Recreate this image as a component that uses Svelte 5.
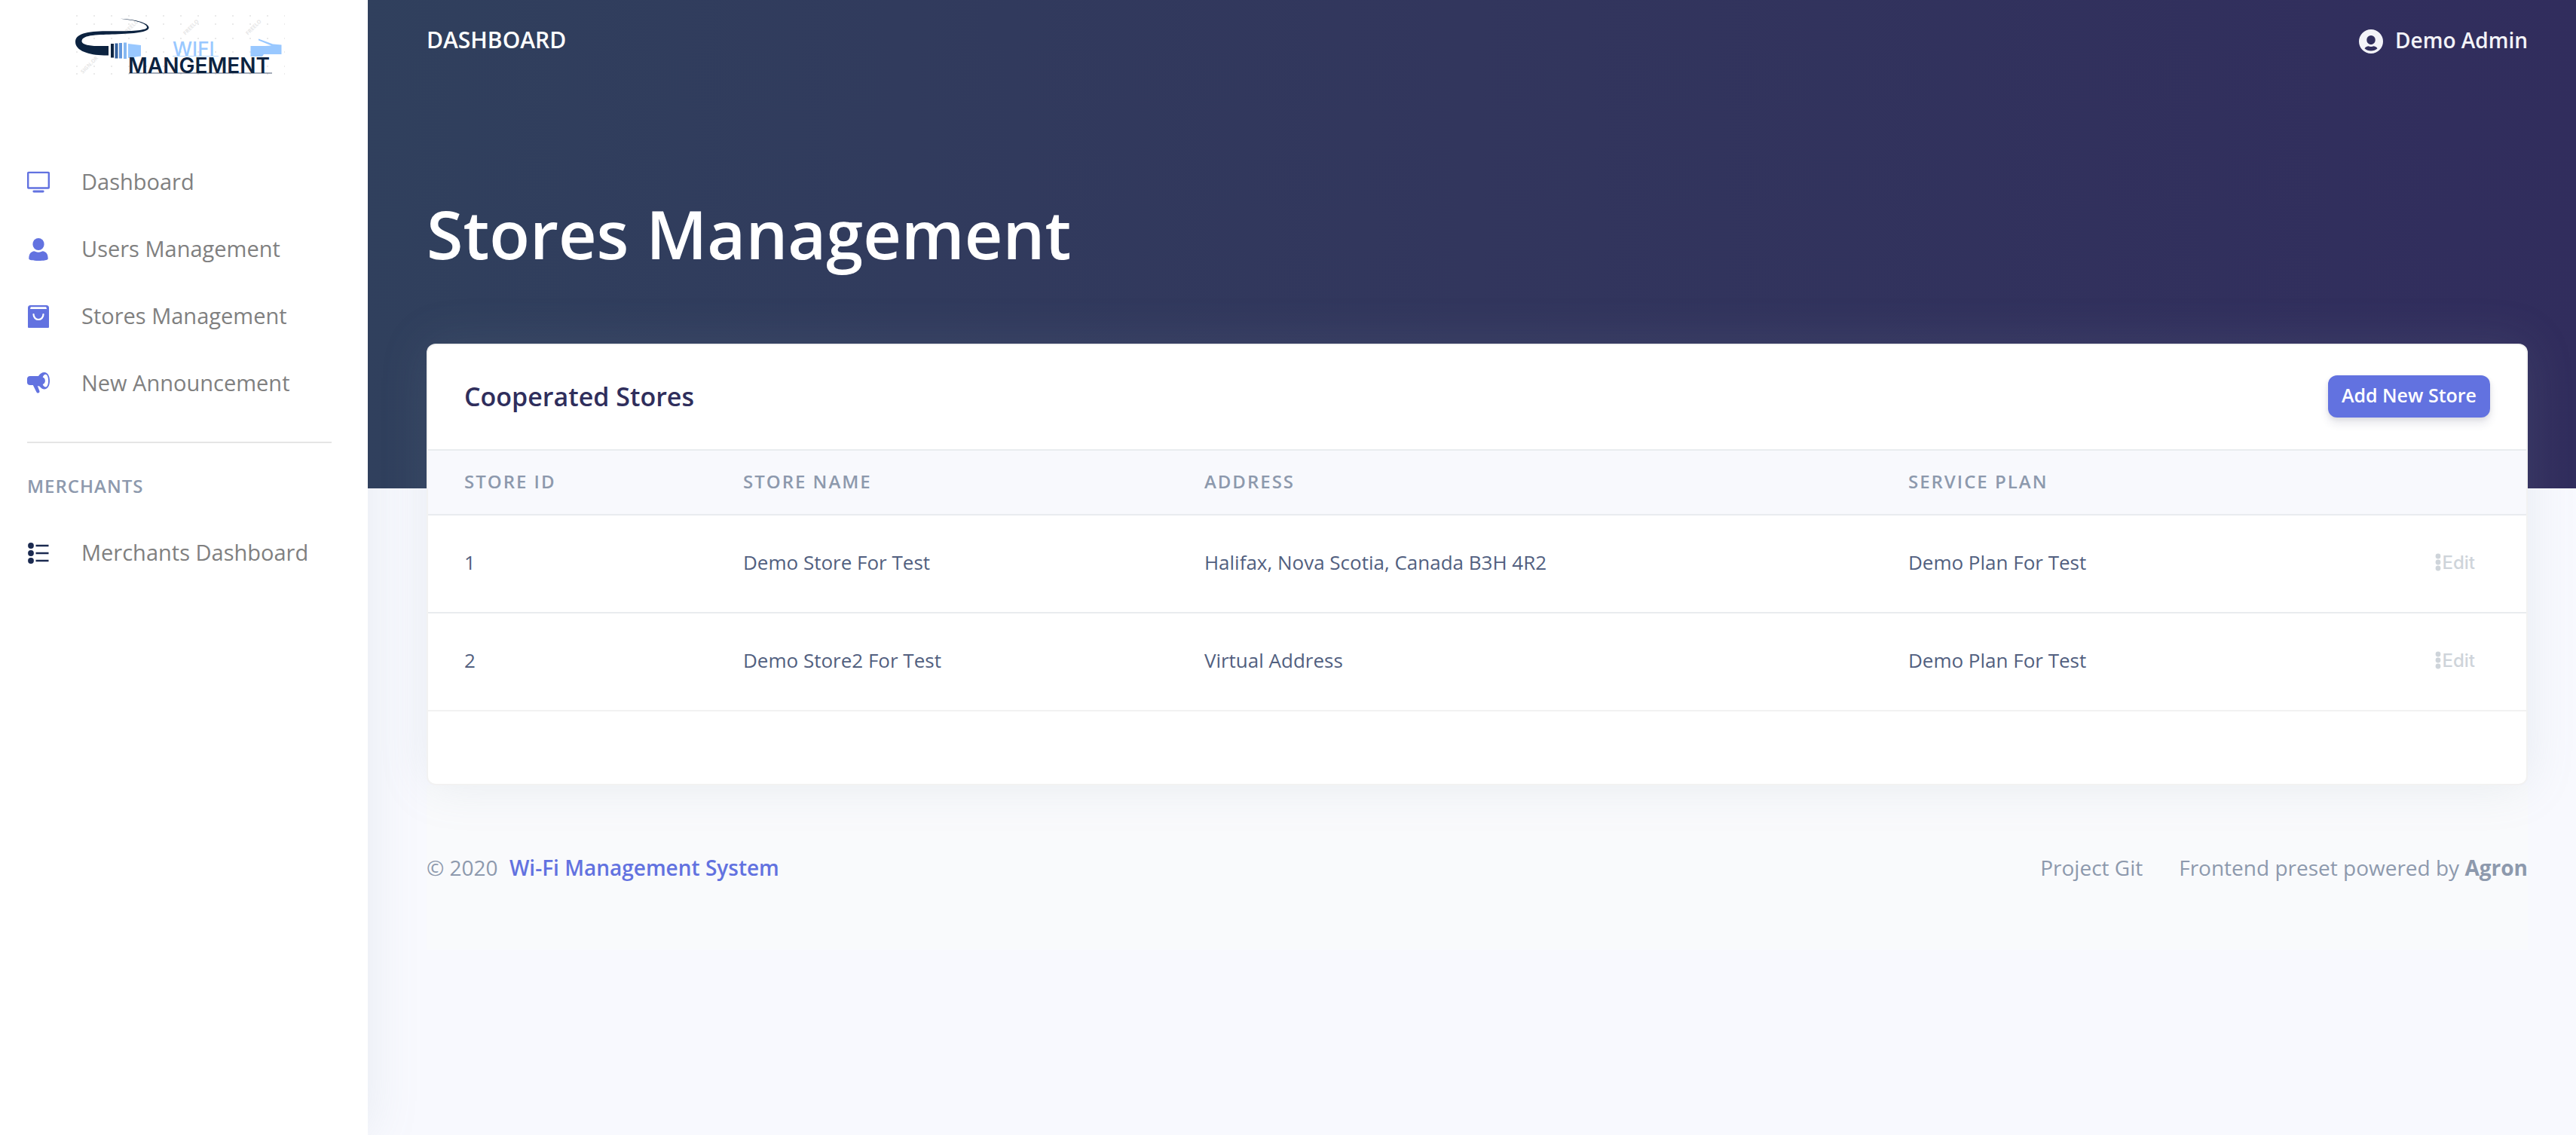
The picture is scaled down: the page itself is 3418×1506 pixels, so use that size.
<script>
  const stores = [
    { id: 1, name: 'Demo Store For Test', address: 'Halifax, Nova Scotia, Canada B3H 4R2', plan: 'Demo Plan For Test' },
    { id: 2, name: 'Demo Store2 For Test', address: 'Virtual Address', plan: 'Demo Plan For Test' }
  ];

  const links = [
    { icon: 'tv', label: 'Dashboard' },
    { icon: 'user', label: 'Users Management' },
    { icon: 'bag', label: 'Stores Management' },
    { icon: 'horn', label: 'New Announcement' }
  ];

  const dotColumns = Array.from({ length: 13 }, (_, i) => 2 + i * 23);
  const dotRows = [1, 12, 31, 49, 68, 78];
</script>

{#snippet icon(name)}
  <svg class="icon {name}" viewBox="0 0 30 30" aria-hidden="true">
    {#if name === 'tv'}
      <rect x="1.2" y="1.9" width="27.6" height="20.6" rx=".6" fill="none" stroke="currentColor" stroke-width="2.4" />
      <path d="M8.8 27h12.4" stroke="currentColor" stroke-width="2.8" stroke-linecap="round" />
    {:else if name === 'user'}
      <ellipse cx="15" cy="8" rx="7.6" ry="8" fill="currentColor" />
      <path d="M2.3 27.5c0-6 2-9.300 6.700-10.200 1.500 0 3 1.500 6 1.500s4.500-1.500 6-1.500c4.700.9 6.700 4.200 6.700 10.200 0 1.600-5.500 2.500-12.700 2.500S2.300 29.100 2.300 27.500z" fill="currentColor" />
    {:else if name === 'bag'}
      <path d="M4.500 0h21a3.500 3.500 0 0 1 3.500 3.500V29a1 1 0 0 1-1 1H2a1 1 0 0 1-1-1V3.500A3.500 3.500 0 0 1 4.500 0z" fill="currentColor" />
      <path d="M4.800 2.300h20.400l.8 2.700H4z" fill="#fff" />
      <path d="M8.500 12c0 4.300 3 7 6.500 7s6.500-2.700 6.500-7" fill="none" stroke="#fff" stroke-width="2.200" stroke-linecap="round" />
    {:else if name === 'horn'}
      <path d="M4 5h11c1.700-3 4.500-5 8-5 4.300 0 7 5 7 11.200S27.300 22.500 23 22.500c-2.500 0-4.700-1.400-6.300-3.700l-2.900-.8 2.500 6.500c.6 1.700-.3 3-1.800 3-1 0-1.700-.5-2.100-1.300L7.800 17H4c-2.500 0-4-1.600-4-3.600V8.600C0 6.600 1.500 5 4 5z" fill="currentColor" />
      <path d="M24.500 2.800c-1.700 0-3 1.500-3.800 3.600 2 .7 3.200 2.500 3.200 4.800s-1.200 4-3.200 4.800c.8 2.200 2.100 3.600 3.800 3.600 2.200 0 3.600-3.800 3.600-8.400s-1.400-8.400-3.600-8.400z" fill="#fff" />
    {:else if name === 'list'}
      <g fill="currentColor">
        <circle cx="5" cy="5" r="3.900" /><circle cx="5" cy="15" r="3.900" /><circle cx="5" cy="25" r="3.900" />
        <path d="M11.500 3.800h17v2.400h-17zM11.500 13.800h17v2.400h-17zM11.500 23.800h17v2.400h-17z" />
      </g>
    {/if}
  </svg>
{/snippet}

<div class="layout">
  <aside class="sidebar">
    <a class="brand" href="#home" aria-label="Wifi Mangement">
      <svg class="logo" viewBox="0 0 278 80" aria-hidden="true">
        <g fill="#e3e3e3">
          {#each dotRows as y}
            {#each dotColumns as x}
              <circle cx={x} cy={y} r="1" />
            {/each}
          {/each}
        </g>
        <g class="mark">
          <text transform="translate(66 27) rotate(-45)">FREELO</text>
          <text transform="translate(146 27) rotate(-45)">FREELO</text>
          <text transform="translate(229 27) rotate(-45)">FREELO</text>
          <text transform="translate(10 78) rotate(-45)">SIGN.OR</text>
        </g>
        <path d="M56 4.500C76 5 97.500 10 97.500 16.500c0 6.500-20 8-45 9C32 26.200 9 25.500 8.500 34.500c0 6 16 7 27.500 6.500h8v12.500H38C18 53 0 47.500 0 35.500 0 22 24 21 50 21.200c22 .3 45-.7 45-5C95 10.500 76 6 56 4.500z" fill="#0c2340" />
        <path d="M47 38h4v18.500h-4z" fill="#0c2340" />
        <path d="M52.500 37.500h4v20h-4z" fill="#35619d" />
        <path d="M58 37h4v20.500h-4z" fill="#6297dc" />
        <path d="M64 36.500h4V58h-4z" fill="#86b8f2" />
        <path d="M70 38l17 2v14.500l-17 2.500z" fill="#99c8ff" />
        <path d="M243 31.500l19 7 11.500 1V52H250l-2 3h-15.500V41H252l8-.5-17-7z" fill="#99c8ff" />
        <path d="M129 54.500h61" stroke="#b8d9ff" />
        <path d="M71 77h190" stroke="#4a5b74" />
        <text class="wifi" x="129" y="54">WIFI</text>
        <text class="name" x="70" y="77">MANGEMENT</text>
      </svg>
    </a>

    <nav>
      <ul>
        {#each links as link}
          <li><a class="nav-link" href="#{link.icon}">{@render icon(link.icon)}<span>{link.label}</span></a></li>
        {/each}
      </ul>
      <hr />
      <h6>MERCHANTS</h6>
      <ul>
        <li><a class="nav-link" href="#merchants">{@render icon('list')}<span>Merchants Dashboard</span></a></li>
      </ul>
    </nav>
  </aside>

  <div class="main">
    <header class="hero">
      <div class="topbar">
        <a class="crumb" href="#dashboard">DASHBOARD</a>
        <a class="account" href="#account">
          <svg class="avatar" viewBox="0 0 32 32" aria-hidden="true">
            <path fill-rule="evenodd" d="M16 0a16 16 0 1 0 0 32 16 16 0 0 0 0-32zm0 8a5.700 5.700 0 0 1 5.700 6c0 3.500-2.500 6-5.700 6s-5.700-2.500-5.700-6A5.700 5.700 0 0 1 16 8zM7.500 25.200c1.500-2 3.500-2.900 5-2.900 1.200.5 2.300.7 3.500.7s2.300-.2 3.500-.7c1.500 0 3.500.9 5 2.900a12.500 12.500 0 0 1-17 0z" />
          </svg>
          <span>Demo Admin</span>
        </a>
      </div>
      <h1>Stores Management</h1>
    </header>

    <main class="content">
      <section class="card">
        <div class="card-header">
          <h3>Cooperated Stores</h3>
          <button class="add" type="button">Add New Store</button>
        </div>
        <table>
          <colgroup>
            <col class="c-id" /><col class="c-name" /><col class="c-address" /><col /><col class="c-edit" />
          </colgroup>
          <thead>
            <tr>
              <th scope="col">STORE ID</th>
              <th scope="col">STORE NAME</th>
              <th scope="col">ADDRESS</th>
              <th scope="col">SERVICE PLAN</th>
              <th scope="col" aria-label="Actions"></th>
            </tr>
          </thead>
          <tbody>
            {#each stores as store}
              <tr>
                <td>{store.id}</td>
                <td>{store.name}</td>
                <td>{store.address}</td>
                <td>{store.plan}</td>
                <td class="actions">
                  <button class="edit" type="button">
                    <svg viewBox="0 0 8 24" aria-hidden="true">
                      <circle cx="4" cy="4" r="3.400" /><circle cx="4" cy="12" r="3.400" /><circle cx="4" cy="20" r="3.400" />
                    </svg>Edit</button>
                </td>
              </tr>
            {/each}
          </tbody>
        </table>
        <div class="card-footer"></div>
      </section>

      <footer>
        <div class="copyright">© 2020 <a href="#system">Wi-Fi Management System</a></div>
        <div class="credits">
          <a href="#git">Project Git</a>
          <span>Frontend preset powered by <b>Agron</b></span>
        </div>
      </footer>
    </main>
  </div>
</div>

<style>
  :global(body) {
    background: #f8f9fe;
  }

  .layout,
  .layout * {
    box-sizing: border-box;
  }

  .layout {
    display: grid;
    grid-template-columns: 488px minmax(0, 1fr);
    min-height: 100vh;
    font-family: 'Open Sans', sans-serif;
    font-size: 28px;
    line-height: 42px;
  }

  a {
    color: inherit;
    text-decoration: none;
  }

  h1,
  h3,
  h6,
  ul {
    margin: 0;
    padding: 0;
    list-style: none;
  }

  button {
    border: 0;
    cursor: pointer;
  }

  /* Sidebar */
  .sidebar {
    padding: 20px 36px;
    background: #fff;
    box-shadow: 0 0 64px rgba(136, 152, 170, 0.15);
  }

  .brand {
    display: block;
    margin: 0 64px 97px;
  }

  .logo {
    display: block;
    width: 278px;
    height: 80px;
  }

  .mark {
    fill: #e6e6e6;
    font: 700 7px 'Open Sans', sans-serif;
  }

  .wifi {
    fill: #99c8ff;
    font: 500 26px Inter, sans-serif;
  }

  .name {
    fill: #0c2340;
    font: 600 28px Inter, sans-serif;
  }

  .nav-link {
    display: flex;
    align-items: center;
    height: 89px;
    color: #808080;
    font-size: 29px;
  }

  .nav-link span {
    padding-bottom: 2px;
  }

  .icon {
    width: 30px;
    height: 30px;
    margin-right: 42px;
    color: #6272e0;
  }

  .icon.list {
    color: #1b2a50;
  }

  hr {
    height: 2px;
    margin: 33px 12px 33px 0;
    border: 0;
    background: #e5e5e5;
  }

  h6 {
    margin-bottom: 20px;
    color: #8d99ad;
    font-size: 24px;
    font-weight: 600;
    line-height: 48px;
    letter-spacing: 1px;
  }

  /* Header band */
  .hero {
    position: relative;
    padding: 0 64px 192px 78px;
    background: linear-gradient(87deg, #30405d 0%, #32365d 50%, #312d5d 100%);
    color: #fff;
  }

  .topbar {
    display: flex;
    align-items: center;
    justify-content: space-between;
    height: 106px;
  }

  .crumb,
  .account {
    font-weight: 600;
  }

  .crumb {
    font-size: 30px;
  }

  .account {
    display: flex;
    align-items: center;
    gap: 16px;
    color: #f3f3f8;
  }

  .avatar {
    width: 32px;
    height: 32px;
    margin-top: 4px;
    fill: currentColor;
  }

  h1 {
    padding: 144px 0 86px;
    font-size: 88px;
    font-weight: 600;
    line-height: 120px;
  }

  /* Card */
  .content {
    margin-top: -192px;
    padding: 0 64px 0 78px;
  }

  .card {
    position: relative;
    z-index: 1;
    border: 2px solid rgba(0, 0, 0, 0.05);
    border-radius: 12px;
    background: #fff;
    box-shadow: 0 0 64px rgba(136, 152, 170, 0.15);
  }

  .card-header {
    display: flex;
    align-items: center;
    justify-content: space-between;
    height: 140px;
    padding: 0 48px 2px;
    border-bottom: 2px solid #e9ecef;
  }

  h3 {
    color: #2f2e5c;
    font-size: 34px;
    font-weight: 600;
    line-height: 52px;
  }

  .add {
    height: 56px;
    padding: 0 18px 4px;
    border-radius: 12px;
    background: #6272e0;
    box-shadow: 0 8px 12px rgba(50, 50, 93, 0.11), 0 2px 6px rgba(0, 0, 0, 0.08);
    color: #fff;
    font: 600 25px 'Open Sans', sans-serif;
  }

  table {
    width: 100%;
    border-spacing: 0;
    table-layout: fixed;
    color: #525f7f;
    font-size: 26px;
  }

  .c-id {
    width: 13.29%;
  }

  .c-name {
    width: 21.98%;
  }

  .c-address {
    width: 33.55%;
  }

  .c-edit {
    width: 10%;
  }

  th,
  td {
    padding: 0 48px 4px;
    border-bottom: 2px solid #e9ecef;
    text-align: left;
  }

  th {
    height: 86px;
    padding-bottom: 2px;
    background: #f8f9fd;
    color: #8d99ad;
    font-size: 24px;
    font-weight: 600;
    letter-spacing: 2px;
  }

  td {
    height: 130px;
  }

  tbody tr:last-child td {
    border-color: #f2f2f2;
  }

  td.actions {
    padding-bottom: 0;
    text-align: right;
  }

  .edit {
    display: inline-flex;
    align-items: center;
    gap: 1px;
    padding: 0 20px;
    background: none;
    color: #ced4da;
    font: 500 24px Inter, sans-serif;
  }

  .edit svg {
    width: 8px;
    height: 24px;
    fill: currentColor;
  }

  .card-footer {
    height: 96px;
  }

  /* Page footer */
  footer {
    display: flex;
    align-items: center;
    justify-content: space-between;
    height: 218px;
    background: #f9fafc;
    color: #8d99ad;
  }

  .copyright a {
    margin-left: 8px;
    color: #6272e0;
    font-weight: 600;
  }

  .credits {
    display: flex;
    gap: 48px;
  }
</style>
